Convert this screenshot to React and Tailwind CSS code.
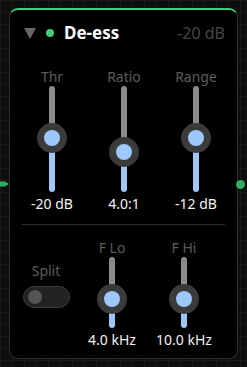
import React from "react";

const font = { fontFamily: '"Noto Sans", "Open Sans", sans-serif' };

function Slider({ height, knob }) {
    // knob = distance of knob centre from top of track
    return (
        <div className="relative w-[30px]" style={{ height }}>
            <div className="absolute left-[12px] top-0 w-[6px] rounded-full bg-[#8a8a8a]" style={{ height: knob }} />
            <div className="absolute left-[12px] bottom-0 w-[6px] rounded-full bg-[#9cc8fb]" style={{ top: knob }} />
            <div
                className="absolute left-0 w-[30px] h-[30px] rounded-full bg-[#3a3a3a] flex items-center justify-center"
                style={{ top: knob - 15 }}
            >
                <div className="w-[16px] h-[16px] rounded-full bg-[#9cc8fb]" />
            </div>
        </div>
    );
}

function Control({ label, value, height, knob }) {
    return (
        <div className="flex flex-col items-center">
            <div className="text-[14px] leading-[16px] text-[#5c5c5c]">{label}</div>
            <div className="mt-[1px]">
                <Slider height={height} knob={knob} />
            </div>
            <div className="mt-[4px] text-[14px] leading-[16px] text-[#f2f2f2]">{value}</div>
        </div>
    );
}

export default function App() {
    return (
        <div
            style={font}
            className="relative w-[247px] h-[367px] overflow-hidden bg-[#0e0e0e] bg-[linear-gradient(to_right,#191919_1px,transparent_1px),linear-gradient(to_bottom,#191919_1px,transparent_1px)] bg-[size:12px_12px] pt-[8px] pl-[9px]"
        >
            <div className="w-[229px] h-[351px] rounded-[9px] border border-[#2c2c2c] border-t-2 border-t-[#3fcf7c] bg-black">
                {/* header */}
                <div className="flex items-center h-[24px] mt-[11px] pl-[14px] pr-[12px]">
                    <svg width="12" height="11" viewBox="0 0 12 11">
                        <polygon points="0,0 12,0 6,11" fill="#666666" />
                    </svg>
                    <div className="ml-[10px] w-[8px] h-[8px] rounded-full bg-[#3fcf7c]" />
                    <div className="ml-[10px] text-[17px] font-bold text-white leading-[24px]">De-ess</div>
                    <div className="ml-auto text-[16px] text-[#474747] leading-[24px]">-20 dB</div>
                </div>

                {/* main sliders */}
                <div className="grid grid-cols-3 w-[216px] ml-[6px] mt-[24px]">
                    <Control label="Thr" value="-20 dB" height={106} knob={52} />
                    <Control label="Ratio" value="4.0:1" height={106} knob={66} />
                    <Control label="Range" value="-12 dB" height={106} knob={52} />
                </div>

                <div className="mx-[12px] mt-[12px] h-px bg-[#2e2e2e]" />

                {/* bottom row */}
                <div className="flex mt-[15px]">
                    <div className="w-[72px] flex flex-col items-center pt-[23px]">
                        <div className="text-[14px] leading-[16px] text-[#5c5c5c]">Split</div>
                        <div className="mt-[7px] w-[47px] h-[22px] rounded-full bg-[#222222] border border-[#3c3c3c] flex items-center pl-[4px]">
                            <div className="w-[14px] h-[14px] rounded-full bg-[#555555]" />
                        </div>
                    </div>
                    <div className="w-[60px] flex justify-center">
                        <Control label="F Lo" value="4.0 kHz" height={71} knob={42} />
                    </div>
                    <div className="w-[84px] flex justify-center">
                        <Control label="F Hi" value="10.0 kHz" height={71} knob={42} />
                    </div>
                </div>
            </div>

            {/* connection pins */}
            <svg className="absolute left-0 top-[180px]" width="9" height="8" viewBox="0 0 9 8">
                <polygon points="0,1.5 5,1.5 9,4 5,6.5 0,6.5" fill="#2fae62" />
            </svg>
            <div className="absolute left-[236px] top-[180px] w-[9px] h-[9px] rounded-full bg-[#2fae62]" />
        </div>
    );
}
